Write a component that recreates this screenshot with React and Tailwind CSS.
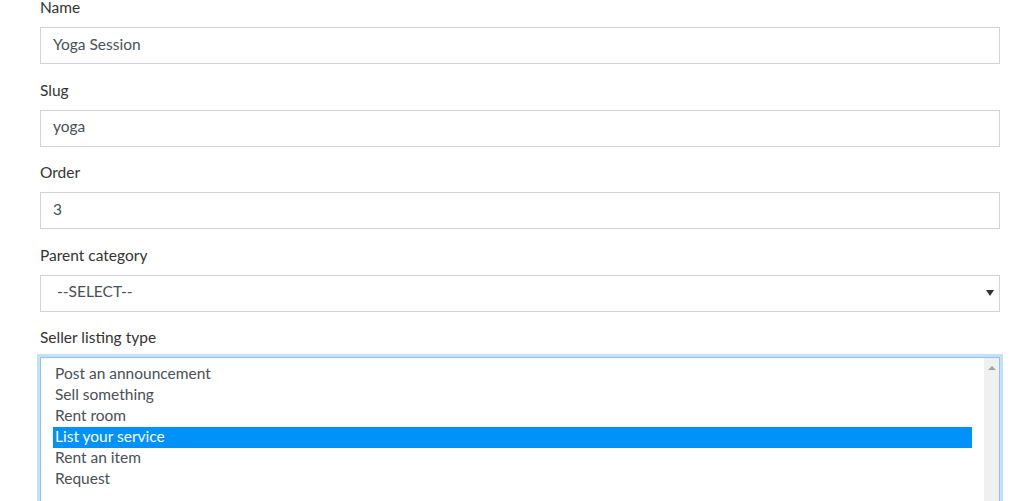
import React from 'react';

const fields = [
    { label: 'Name', value: 'Yoga Session' },
    { label: 'Slug', value: 'yoga' },
    { label: 'Order', value: '3' },
];

const listingTypes = [
    'Post an announcement',
    'Sell something',
    'Rent room',
    'List your service',
    'Rent an item',
    'Request',
];

export default function App() {
    return (
        <div className="bg-white w-[1028px] h-[501px] overflow-hidden pl-10 pr-7 text-[15.5px] font-['Lato',sans-serif]">
            {fields.map((f) => (
                <div key={f.label} className="h-[82.5px]">
                    <label className="block h-[14px] leading-[14px] mb-[13px] text-[#333]">{f.label}</label>
                    <div className="h-[37px] border border-[#ced4da] px-3 pb-[2px] flex items-center text-[#495057]">
                        {f.value}
                    </div>
                </div>
            ))}

            <div className="h-[82.5px]">
                <label className="block h-[14px] leading-[14px] mb-[13px] text-[#333]">Parent category</label>
                <div className="h-[37px] border border-[#ced4da] pl-4 pr-[5px] pb-[2px] flex items-center justify-between text-[#495057]">
                    <span>--SELECT--</span>
                    <svg width="8" height="6" viewBox="0 0 8 6" className="mt-[2px]">
                        <path d="M0 0 H8 L4 6 Z" fill="#333" />
                    </svg>
                </div>
            </div>

            <div>
                <label className="block h-[14px] leading-[14px] mb-[13px] text-[#333]">Seller listing type</label>
                <div className="h-[160px] border border-[#8cc3f2] shadow-[0_0_0_3px_#c5e1f8] flex">
                    <div className="flex-1 pl-3 pr-3 pt-[6px] text-[#495057]">
                        {listingTypes.map((t) => (
                            <div
                                key={t}
                                className={
                                    t === 'List your service'
                                        ? 'h-[21px] leading-[19px] pl-[2px] bg-[#0092f8] text-white'
                                        : 'h-[21px] leading-[19px] pl-[2px]'
                                }
                            >
                                {t}
                            </div>
                        ))}
                    </div>
                    <div className="w-[15px] bg-[#f0f0f0] flex justify-center pt-[8px]">
                        <svg width="8" height="4" viewBox="0 0 8 4">
                            <path d="M0 4 L4 0 L8 4 Z" fill="#a3a3a3" />
                        </svg>
                    </div>
                </div>
            </div>
        </div>
    );
}
